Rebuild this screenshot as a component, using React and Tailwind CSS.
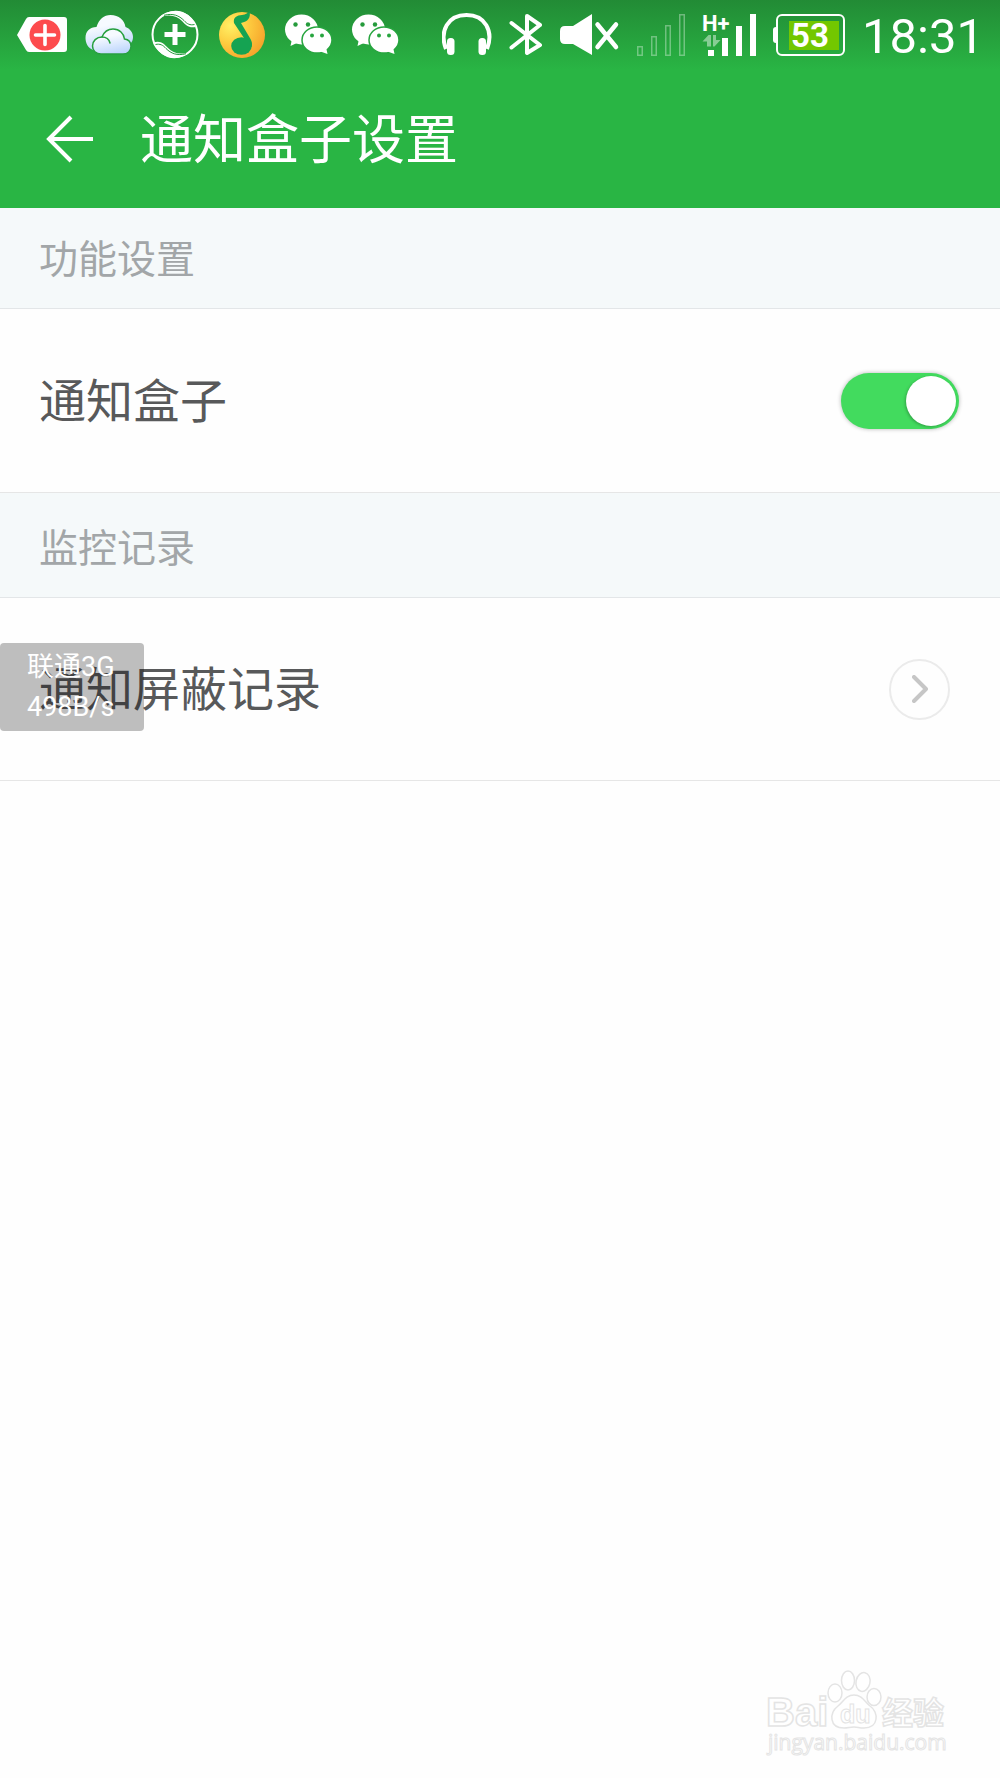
import clsx from 'clsx';

function CleanerTagIcon() {
  return (
    <svg className="h-12 w-12 overflow-visible" viewBox="0 0 48 48" aria-hidden="true">
      <path d="M-1 24 L8 8 Q9 6 11 6 H46 Q49 6 49 9 V38 Q49 41 46 41 H11 Q9 41 8 39 Z" fill="#fff" />
      <circle cx="27" cy="24" r="15.5" fill="#fd4b4d" />
      <path d="M27 14.500V33.500M17.500 24H36.500" stroke="#fff" strokeWidth="3.600" strokeLinecap="round" />
    </svg>
  );
}

function CloudIcon() {
  return (
    <svg className="h-12 w-12 overflow-visible" viewBox="0 0 48 48" aria-hidden="true">
      <defs>
        <linearGradient id="cloud" x1="0.3" y1="0" x2="0.6" y2="1">
          <stop offset="0.300" stopColor="#f6faff" />
          <stop offset="1" stopColor="#bcd5fc" />
        </linearGradient>
      </defs>
      <path d="M8 39C3 37 0.500 32 0.500 27C0.500 20 5 16 11.500 16C14 8 19 4 25.500 4C34 4 39.500 9 40.500 16C45 17.500 48 21.500 48 26C48 29 47 31 45 33C40 37 14 41 8 39Z" fill="url(#cloud)" />
      <path
        d="M16 43C11 43 7.500 39.500 7.500 35C7.500 30 11.500 26 17 26C19 21 23 18 28 18C34.500 18 39 22.500 39.500 28C43.500 28.500 46 31.500 46 35.500C46 40 42.500 43 38 43Z"
        fill="url(#cloud)"
        stroke="#27a03f"
        strokeWidth="1.500"
      />
      <path d="M17 26C21 26 24 28 25 32" fill="none" stroke="#27a03f" strokeWidth="1.500" strokeLinecap="round" />
    </svg>
  );
}

function GuardIcon() {
  return (
    <svg className="h-12 w-12 overflow-visible" viewBox="0 0 48 48" aria-hidden="true">
      <circle cx="23" cy="23.500" r="22.500" fill="none" stroke="#fff" strokeWidth="2" />
      <g id="swoosh">
        <path d="M7 6.500C17 -2 28 -2 36 4C40 7 43 11 44.500 15.500C38 18 34 14.500 30 10C25 4.500 17 2.500 7 6.500Z" fill="#fff" />
        <path d="M12 4.300C21 2 27 4.500 32 9.500C35 13 38 14.500 42.500 13.500" fill="none" stroke="#259a3c" strokeWidth="1" />
      </g>
      <use href="#swoosh" transform="rotate(180 23 23.5)" />
      <path d="M23 13V34M12.500 23.500H33.500" stroke="#fff" strokeWidth="5" />
    </svg>
  );
}

function MusicIcon() {
  return (
    <svg className="h-12 w-12 overflow-visible" viewBox="0 0 48 48" aria-hidden="true">
      <defs>
        <radialGradient id="disc" cx="0.25" cy="0.3" r="0.8">
          <stop offset="0" stopColor="#fff065" />
          <stop offset="0.500" stopColor="#fdcb3f" />
          <stop offset="1" stopColor="#f6a52c" />
        </radialGradient>
      </defs>
      <circle cx="23" cy="24" r="23" fill="url(#disc)" />
      <g fill="#15a352">
        <path d="M15 12C14 6 18 4.500 23 4C27 3.500 29 2 30.500 0C32 7 29 10.500 22 12L31.500 28C33 31 33.500 33 32.500 36L27 30Z" />
        <ellipse cx="22.500" cy="35" rx="10.300" ry="8.800" />
      </g>
    </svg>
  );
}

function ChatIcon() {
  return (
    <svg className="h-12 w-12 overflow-visible" viewBox="0 0 48 48" aria-hidden="true">
      <ellipse cx="15.500" cy="18.500" rx="16.500" ry="15" fill="#fff" />
      <path d="M6 28L4.500 35L13 31Z" fill="#fff" />
      <g fill="#259b3c">
        <circle cx="9.500" cy="13.500" r="2.200" />
        <circle cx="22" cy="13.500" r="2.200" />
      </g>
      <ellipse cx="31" cy="29" rx="15" ry="13" fill="#fff" stroke="#27a53f" strokeWidth="1.500" />
      <path d="M33 40L41.500 43L40 36Z" fill="#fff" />
      <g fill="#27a53f">
        <circle cx="26" cy="24.500" r="2" />
        <circle cx="36" cy="24.500" r="2" />
      </g>
    </svg>
  );
}

function HeadphonesIcon() {
  return (
    <svg className="h-12 w-[50px]" viewBox="0 0 50 48" aria-hidden="true">
      <path d="M4 38C-3 20 6 4 24.500 4C43 4 52 20 45 38" fill="none" stroke="#fff" strokeWidth="4" />
      <rect x="5" y="27" width="7.500" height="17" rx="3.500" fill="#fff" />
      <rect x="36.500" y="27" width="7.500" height="17" rx="3.500" fill="#fff" />
    </svg>
  );
}

function BluetoothIcon() {
  return (
    <svg className="h-12 w-[34px]" viewBox="0 0 34 48" aria-hidden="true">
      <path
        d="M2.500 12L31 34L18 42V5L31 14L2.500 36.500"
        fill="none"
        stroke="#fff"
        strokeWidth="4"
        strokeLinecap="round"
        strokeLinejoin="round"
      />
    </svg>
  );
}

function MuteIcon() {
  return (
    <svg className="h-12 w-[60px]" viewBox="0 0 60 48" aria-hidden="true">
      <path d="M5 15H13L32 3V44L13 33H5Q0 33 0 28V20Q0 15 5 15Z" fill="#fff" />
      <path d="M37.500 13.500L56 36M56 13.500L37.500 36" stroke="#fff" strokeWidth="4.500" strokeLinecap="round" />
    </svg>
  );
}

const BARS = [
  { x: 0, empty: 35, full: 39 },
  { x: 14, empty: 25, full: 27 },
  { x: 28, empty: 14, full: 15 },
  { x: 42, empty: 3, full: 3 },
];

function NoSignalIcon() {
  return (
    <svg className="h-12 w-12" viewBox="0 0 48 48" aria-hidden="true">
      {BARS.map((bar) => (
        <rect
          key={bar.x}
          x={bar.x + 0.75}
          y={bar.empty + 0.75}
          width="4.500"
          height={44 - bar.empty - 0.5}
          fill="none"
          stroke="#fff"
          strokeOpacity="0.350"
          strokeWidth="1.500"
        />
      ))}
    </svg>
  );
}

function DataSignalIcon() {
  return (
    <svg className="h-12 w-[54px] overflow-visible" viewBox="0 0 54 48" role="img" aria-label="H+">
      <text x="0" y="20" fill="#fff" className="font-['Roboto'] text-[22px] font-bold">H+</text>
      <path d="M0.500 30.500L6.500 24H9V35.500H5V30.500ZM11 24H14V29H18.500L12.500 35.500H11Z" fill="#fff" fillOpacity="0.450" />
      {BARS.map((bar) => (
        <rect key={bar.x} x={bar.x + 6} y={bar.full} width="6" height={45 - bar.full} fill="#fff" />
      ))}
    </svg>
  );
}

function Battery({ level }) {
  return (
    <div className="flex items-center">
      <span className="h-4 w-[3px] rounded-l-sm bg-white" />
      <div className="flex h-[42px] w-[69px] items-center justify-end rounded-md border-2 border-white pr-1">
        <span className="flex h-[29px] w-[50px] items-center bg-[#73c700] pl-0.5 text-[33px] leading-[29px] font-bold">
          {level}
        </span>
      </div>
    </div>
  );
}

function StatusBar() {
  return (
    <div className="flex h-[70px] items-center justify-between bg-linear-to-b from-[#228b35] to-[#29b544] pr-4 pl-[18px] font-['Roboto',sans-serif] text-white">
      <div className="flex items-center gap-[19px]">
        <CleanerTagIcon />
        <CloudIcon />
        <GuardIcon />
        <MusicIcon />
        <ChatIcon />
        <ChatIcon />
      </div>
      <div className="flex items-center gap-[17px]">
        <HeadphonesIcon />
        <BluetoothIcon />
        <MuteIcon />
        <NoSignalIcon />
        <DataSignalIcon />
        <Battery level={53} />
        <time className="pt-1 text-[49px] leading-[60px]">18:31</time>
      </div>
    </div>
  );
}

function SectionTitle({ children, className }) {
  return (
    <h2 className={clsx('border-b border-[#e3e6e8] bg-[#f5f9fa] px-[39px] pb-7 text-[39px] leading-[48px] text-[#a2a6a8]', className)}>
      {children}
    </h2>
  );
}

function SpeedBadge() {
  return (
    <div className="pointer-events-none absolute top-[45px] left-0 w-36 rounded-sm bg-black/25 py-1 pl-[27px] font-['Roboto','Noto_Sans_CJK_SC',sans-serif] text-[27px] leading-10 text-white">
      <p>联通3G</p>
      <p>498B/s</p>
    </div>
  );
}

function Watermark() {
  return (
    <svg className="h-[88px] w-[180px] overflow-visible" viewBox="0 0 180 88" role="img" aria-label="Baidu 经验">
      <g fill="#fff" stroke="#e4e4e4" strokeWidth="1.500">
        <ellipse cx="69" cy="25" rx="7" ry="9" />
        <ellipse cx="82" cy="12.500" rx="6.500" ry="9.500" />
        <ellipse cx="97" cy="14" rx="7" ry="9.500" transform="rotate(12 97 14)" />
        <ellipse cx="108" cy="29" rx="7" ry="8.500" />
        <path d="M88 27C96 27 99 34 104 38C113 44 113 60 98 60C92 60 93 59 88 59C83 59 83 60 78 60C63 60 63 45 72 38C77 34 80 27 88 27Z" />
        <text x="0" y="58" className="font-['Liberation_Sans'] text-[40px] font-bold">Bai</text>
        <text x="74" y="55" strokeWidth="1" className="font-['Liberation_Sans'] text-[25px] font-bold">du</text>
        <text x="116" y="56" className="font-['Noto_Sans_CJK_SC'] text-[31px] font-bold">经验</text>
        <text x="2" y="82" strokeWidth="1" className="font-['Open_Sans'] text-[21px]">jingyan.baidu.com</text>
      </g>
    </svg>
  );
}

export default function App() {
  return (
    <div className="flex min-h-screen flex-col bg-[#fefefe] font-['Noto_Sans_CJK_SC',sans-serif]">
      <header className="bg-[#29b544] text-white">
        <StatusBar />
        <div className="flex h-[138px] items-center gap-[46px] pl-[46px]">
          <button type="button" aria-label="返回">
            <svg className="h-12 w-12" viewBox="0 0 48 48" fill="none" stroke="currentColor" strokeWidth="4">
              <path d="M25 2L3 24L25 46M3 24H47" />
            </svg>
          </button>
          <h1 className="pb-1.5 text-[53px] leading-[64px]">通知盒子设置</h1>
        </div>
      </header>

      <main className="text-[47px] leading-[56px] text-[#58595a]">
        <SectionTitle className="pt-6">功能设置</SectionTitle>
        <div className="flex h-[184px] items-center justify-between border-b border-[#e6e6e6] pr-[41px] pl-[39px]">
          <label htmlFor="notice-box" className="pb-1.5">通知盒子</label>
          <input
            id="notice-box"
            type="checkbox"
            role="switch"
            defaultChecked
            className="flex h-14 w-[118px] appearance-none items-center rounded-full bg-[#d5d5d5] px-[3px] shadow-[0_0_4px_rgba(0,0,0,0.3)] before:size-[50px] before:rounded-full before:bg-white before:shadow-[-1px_1px_3px_rgba(0,0,0,0.25)] checked:justify-end checked:bg-[#42db5e]"
          />
        </div>

        <SectionTitle className="pt-7">监控记录</SectionTitle>
        <div className="relative border-b border-[#e6e6e6]">
          <a href="#records" className="flex h-[182px] items-center justify-between pr-[50px] pl-[39px]">
            <span className="pb-1.5">通知屏蔽记录</span>
            <span className="flex size-[61px] items-center justify-center rounded-full border-2 border-[#ebebeb]">
              <svg className="h-7 w-4" viewBox="0 0 16 28" fill="none" stroke="#c6c6c6" strokeWidth="4" strokeLinecap="round" strokeLinejoin="round" aria-hidden="true">
                <path d="M2 2L14 14L2 26" />
              </svg>
            </span>
          </a>
          <SpeedBadge />
        </div>
      </main>

      <footer className="mt-auto flex justify-end pr-[54px] pb-[22px]">
        <Watermark />
      </footer>
    </div>
  );
}
